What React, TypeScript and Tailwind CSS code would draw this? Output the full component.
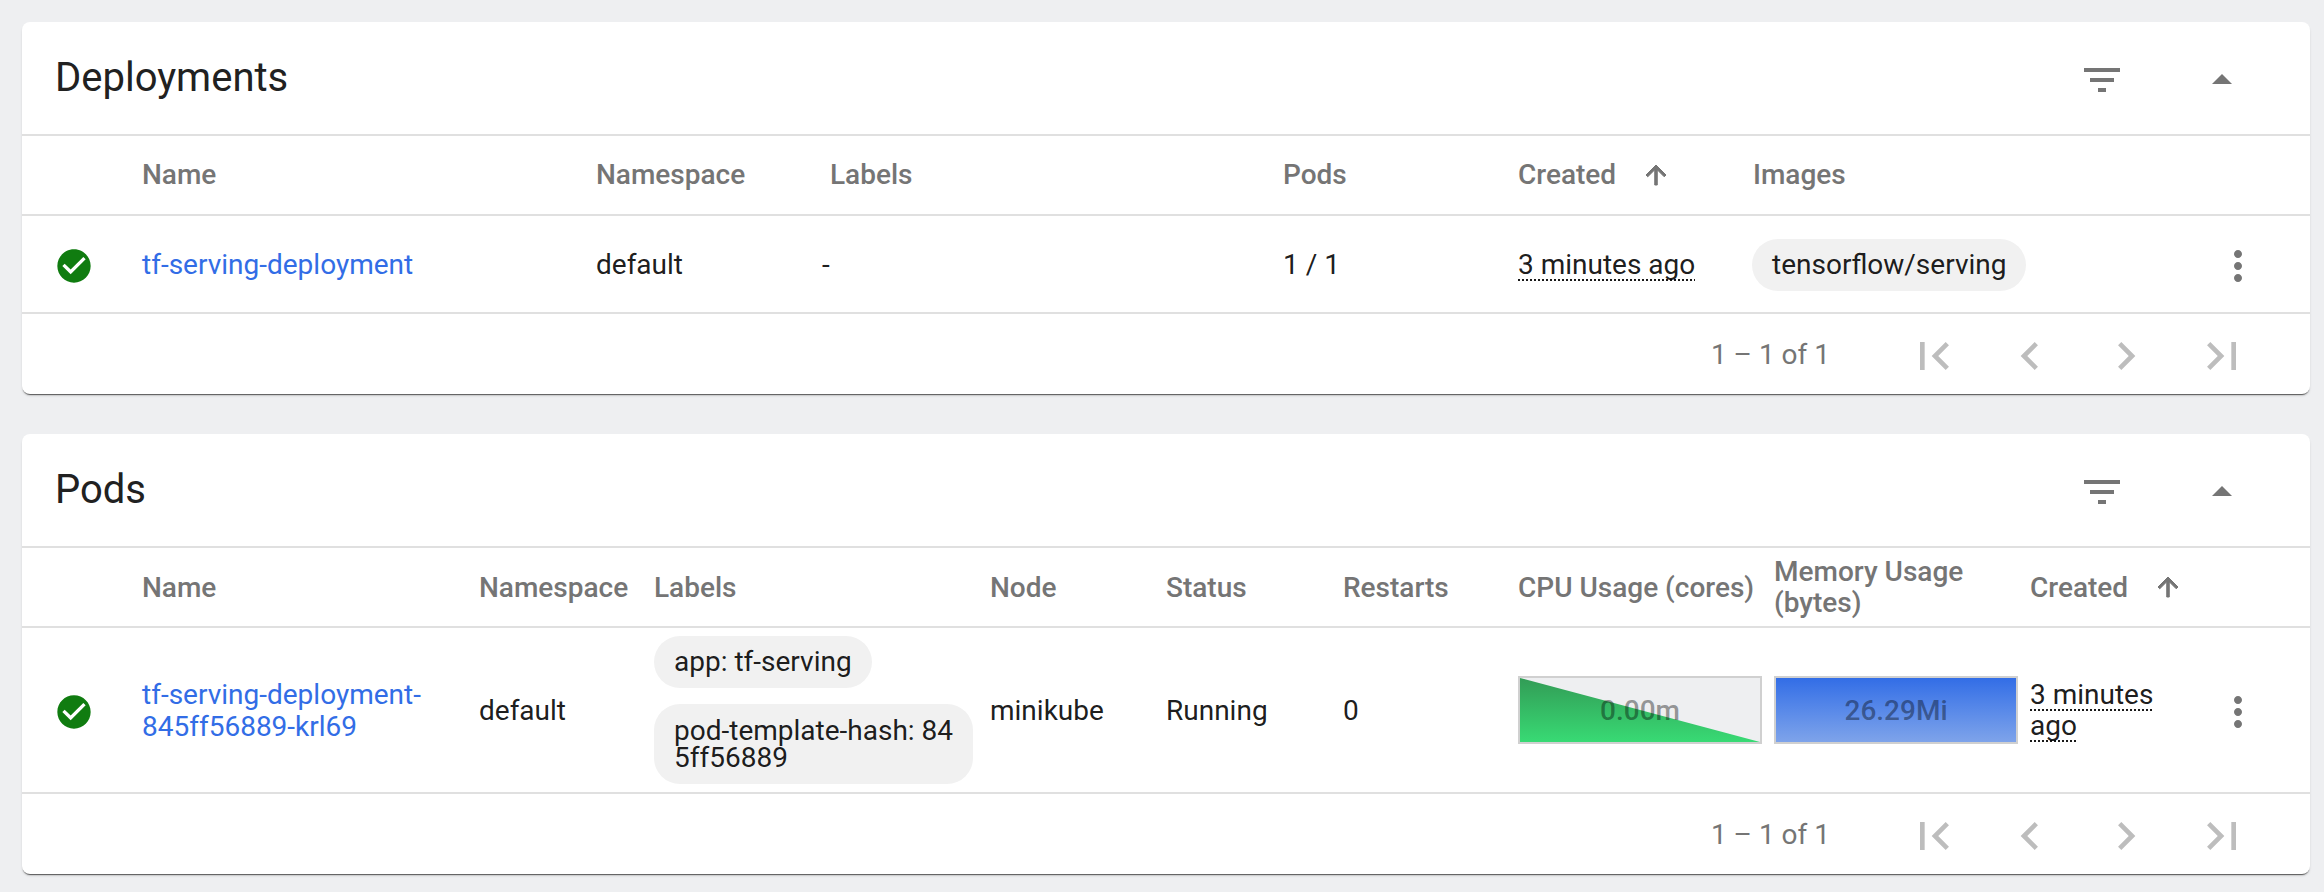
const FILTER = "M10 18h4v-2h-4v2zM3 6v2h18V6H3zm3 7h12v-2H6v2z";
const DROP_UP = "M7 14l5-5 5 5z";
const CHECK_CIRCLE = "M12 2C6.48 2 2 6.48 2 12s4.48 10 10 10 10-4.48 10-10S17.52 2 12 2zm-2 15l-5-5 1.41-1.41L10 14.17l7.59-7.59L19 8l-9 9z";
const MORE = "M12 8c1.1 0 2-.9 2-2s-.9-2-2-2-2 .9-2 2 .9 2 2 2zm0 2c-1.1 0-2 .9-2 2s.9 2 2 2 2-.9 2-2-.9-2-2-2zm0 6c-1.1 0-2 .9-2 2s.9 2 2 2 2-.9 2-2-.9-2-2-2z";
const ARROW_UP = "M4 12l1.41 1.41L11 7.83V20h2V7.83l5.58 5.59L20 12l-8-8-8 8z";
const PAGER = [
  "M18.41 16.59L13.82 12l4.59-4.59L17 6l-6 6 6 6zM6 6h2v12H6z",
  "M15.41 7.41L14 6l-6 6 6 6 1.41-1.41L10.83 12z",
  "M10 6L8.59 7.41 13.17 12l-4.58 4.59L10 18l6-6z",
  "M5.59 7.41L10.18 12l-4.59 4.59L7 18l6-6-6-6zM16 6h2v12h-2z",
];

function Icon({ d, className }: { d: string; className: string }) {
  return (
    <svg viewBox="0 0 24 24" fill="currentColor" className={className}>
      <path d={d} />
    </svg>
  );
}

function CardHeader({ title }: { title: string }) {
  return (
    <div className="flex h-[114px] items-center border-b-2 border-[#e0e0e0] pl-[33px]">
      <h2 className="flex-1 text-[40px] font-normal text-[#212121]">{title}</h2>
      <Icon d={FILTER} className="mt-[3px] mr-[72px] h-12 w-12 text-[#757575]" />
      <Icon d={DROP_UP} className="mt-[3px] mr-[64px] h-12 w-12 text-[#757575]" />
    </div>
  );
}

function Footer() {
  return (
    <div className="flex h-[80px] items-center justify-end pr-[60px]">
      <span className="mt-[2px] mr-[76px] text-[28px] text-[#757575]">1 – 1 of 1</span>
      <div className="mt-[4px] flex gap-10">
        {PAGER.map((d) => (
          <Icon key={d} d={d} className="h-14 w-14 text-[#bdbdbd]" />
        ))}
      </div>
    </div>
  );
}

function Created() {
  return (
    <div className="flex items-center">
      <span>Created</span>
      <Icon d={ARROW_UP} className="ml-[25px] h-[30px] w-[30px] stroke-current stroke-[0.8]" />
    </div>
  );
}

function Chip({ children, className = "" }: { children: string; className?: string }) {
  return (
    <span className={`rounded-[26px] bg-[#f1f1f1] px-5 ${className}`}>
      {children}
    </span>
  );
}

function Ago() {
  return (
    <span className="underline decoration-dotted decoration-2 underline-offset-[5px] [text-decoration-skip-ink:none]">
      3 minutes ago
    </span>
  );
}

function Usage({ value, color }: { value: string; color: "green" | "blue" }) {
  return (
    <div className="relative flex h-[68px] w-[244px] items-center justify-center border-2 border-[#d0d0d0] bg-[#eeeff1]">
      {color === "green" ? (
        <svg viewBox="0 0 240 64" preserveAspectRatio="none" className="absolute inset-0 h-full w-full">
          <defs>
            <linearGradient id="cpu" x1="0" y1="0" x2="0" y2="1">
              <stop offset="0" stopColor="#329c56" />
              <stop offset="1" stopColor="#38da74" />
            </linearGradient>
          </defs>
          <polygon points="0,0 240,64 0,64" fill="url(#cpu)" />
        </svg>
      ) : (
        <div className="absolute inset-0 bg-gradient-to-b from-[#326de6] to-[#7ea3ea]" />
      )}
      <span className="relative text-[28px] font-medium text-black/40">{value}</span>
    </div>
  );
}

function DeploymentsCard() {
  return (
    <section className="h-[372px] overflow-hidden rounded-lg bg-white shadow-[0_2px_1px_-1px_rgba(0,0,0,0.55),0_2px_3px_-1px_rgba(0,0,0,0.25)]">
      <CardHeader title="Deployments" />
      <div className="grid h-[80px] grid-cols-[120px_454px_234px_453px_235px_235px_461px_48px] items-center border-b-2 border-[#e0e0e0] text-[28px] font-medium text-[#757575]">
        <div />
        <div>Name</div>
        <div>Namespace</div>
        <div>Labels</div>
        <div>Pods</div>
        <Created />
        <div>Images</div>
      </div>
      <div className="grid h-[98px] grid-cols-[120px_454px_234px_453px_235px_235px_461px_48px] items-center border-b-2 border-[#e0e0e0] pt-[2px] text-[28px] text-[#000000e6]">
        <Icon d={CHECK_CIRCLE} className="mt-[2px] ml-[32px] h-10 w-10 text-[#107c10]" />
        <a className="text-[#326de6]">tf-serving-deployment</a>
        <div>default</div>
        <div className="-ml-2">-</div>
        <div>1 / 1</div>
        <div className="whitespace-nowrap"><Ago /></div>
        <div className="-ml-px"><Chip className="inline-block py-[10px] leading-[32px]">tensorflow/serving</Chip></div>
        <Icon d={MORE} className="mt-[2px] h-12 w-12 text-[#757575]" />
      </div>
      <Footer />
    </section>
  );
}

function PodsCard() {
  return (
    <section className="h-[440px] overflow-hidden rounded-lg bg-white shadow-[0_2px_1px_-1px_rgba(0,0,0,0.55),0_2px_3px_-1px_rgba(0,0,0,0.25)]">
      <CardHeader title="Pods" />
      <div className="grid h-[80px] grid-cols-[120px_337px_175px_336px_176px_177px_175px_256px_256px_184px_48px] items-center border-b-2 border-[#e0e0e0] text-[28px] leading-[31px] font-medium text-[#757575]">
        <div />
        <div>Name</div>
        <div>Namespace</div>
        <div>Labels</div>
        <div>Node</div>
        <div>Status</div>
        <div>Restarts</div>
        <div className="whitespace-nowrap">CPU Usage (cores)</div>
        <div className="w-[240px]">Memory Usage (bytes)</div>
        <Created />
      </div>
      <div className="grid h-[166px] grid-cols-[120px_337px_175px_336px_176px_177px_175px_256px_256px_184px_48px] items-center border-b-2 border-[#e0e0e0] text-[28px] leading-[31px] text-[#000000e6]">
        <Icon d={CHECK_CIRCLE} className="mt-[4px] ml-[32px] h-10 w-10 text-[#107c10]" />
        <a className="mt-[2px] w-[300px] leading-[32px] text-[#326de6]">tf-serving-deployment-845ff56889-krl69</a>
        <div>default</div>
        <div className="flex flex-col items-start gap-4">
          <Chip className="py-[10px] leading-[32px]">app: tf-serving</Chip>
          <Chip className="w-[319px] py-[13px] leading-[27px] break-all">pod-template-hash: 845ff56889</Chip>
        </div>
        <div>minikube</div>
        <div>Running</div>
        <div>0</div>
        <Usage value="0.00m" color="green" />
        <Usage value="26.29Mi" color="blue" />
        <div className="w-[170px]"><Ago /></div>
        <Icon d={MORE} className="mt-[4px] h-12 w-12 text-[#757575]" />
      </div>
      <Footer />
    </section>
  );
}

export default function App() {
  return (
    <div className="flex h-[892px] flex-col gap-10 overflow-hidden bg-[#eeeff1] pt-[22px] pr-[14px] pl-[22px] font-['Roboto',sans-serif]">
      <DeploymentsCard />
      <PodsCard />
    </div>
  );
}
